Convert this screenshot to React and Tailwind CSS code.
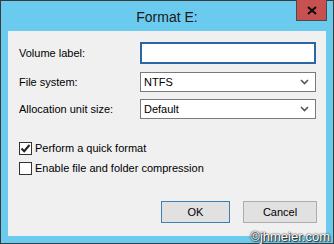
import React from 'react'

function Chevron() {
  return (
    <svg width="9" height="6" viewBox="0 0 9 6" className="text-[#555]">
      <path d="M1 1 L4.5 4.5 L8 1" fill="none" stroke="currentColor" strokeWidth="1.6" />
    </svg>
  )
}

function Select({ value }) {
  return (
    <div className="flex h-[20px] w-[176px] items-center justify-between border border-[#7a7a7a] bg-white pl-[3px] pr-[6px]">
      <span>{value}</span>
      <Chevron />
    </div>
  )
}

function Check({ checked, label }) {
  return (
    <div className="flex h-[15px] items-center gap-[3px]">
      <span className="flex h-[13px] w-[13px] items-center justify-center border border-[#333] bg-white">
        {checked && (
          <svg width="11" height="11" viewBox="0 0 11 11">
            <path d="M1.5 5.5 L4.2 8.2 L9.5 2" fill="none" stroke="#222" strokeWidth="2" />
          </svg>
        )}
      </span>
      <span>{label}</span>
    </div>
  )
}

export default function App() {
  return (
    <div className="relative flex h-[244px] w-[334px] flex-col border border-[#3b3b3b] bg-[#6acbef] px-[7px] pb-[7px] font-['Liberation_Sans',Arial,sans-serif] text-[11px] leading-[15px] text-black">
      <div className="relative flex h-[30px] items-center justify-center">
        <span className="pt-[2px] text-[14px] text-[#1a1a1a]">Format E:</span>
        <div className="absolute right-[-1px] top-[-1px] flex h-[21px] w-[31px] items-center justify-center border border-t-0 border-[#4a4a4a] bg-[#c75050]">
          <svg width="10" height="9" viewBox="0 0 10 9">
            <path d="M1 1 L9 8 M9 1 L1 8" stroke="#111" strokeWidth="2.2" />
          </svg>
        </div>
      </div>

      <div className="flex flex-1 flex-col bg-[#f0f0f0] pl-[11px] pt-[11px]">
        <div className="grid grid-cols-[121px_176px] items-center gap-y-[7px]">
          <span>Volume label:</span>
          <div className="h-[22px] border-2 border-[#2c66a6] bg-white" />
          <span className="mt-[1px]">File system:</span>
          <div className="mt-[1px]"><Select value="NTFS" /></div>
          <span>Allocation unit size:</span>
          <Select value="Default" />
        </div>

        <div className="mt-[22px] flex flex-col gap-[5px]">
          <Check checked label="Perform a quick format" />
          <Check label="Enable file and folder compression" />
        </div>

        <div className="ml-[142px] mt-[25px] flex gap-[13px]">
          <div className="flex h-[22px] w-[69px] items-center justify-center border border-[#3c7fb1] bg-[#e1e1e1]">OK</div>
          <div className="flex h-[22px] w-[74px] items-center justify-center border border-[#adadad] bg-[#e1e1e1]">Cancel</div>
        </div>
      </div>

      <span className="absolute bottom-[-1px] right-[3px] text-[13px] text-white [text-shadow:0_0_1px_#333,0_0_2px_#333,1px_1px_1px_#222]">
        ©jhmeier.com
      </span>
    </div>
  )
}
